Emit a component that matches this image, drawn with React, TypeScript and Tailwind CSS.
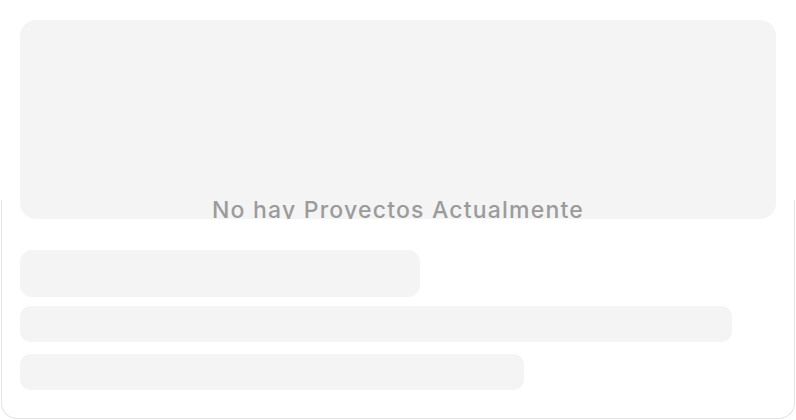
export default function App() {
  return (
    <div className="w-[796px] h-[420px] bg-white overflow-hidden font-['Inter',sans-serif]">
      {/* Hero placeholder */}
      <div className="relative z-10 px-5 pt-5">
        <div className="h-[199px] rounded-2xl bg-[#f4f4f4] overflow-hidden pt-[176px]">
          <p className="text-center text-[23px] leading-[28px] font-medium text-[#9b9b9b] tracking-[1.2px]">
            No hay Proyectos Actualmente
          </p>
        </div>
      </div>

      {/* Card with skeleton rows */}
      <div className="-mt-[19px] mx-px h-[219px] rounded-b-2xl border-x border-b border-[#e4e4e4] px-[18px] pt-[50px]">
        <div className="w-[400px] h-[47px] rounded-xl bg-[#f4f4f4] mb-[9px]"></div>
        <div className="w-[712px] h-9 rounded-[10px] bg-[#f4f4f4] mb-3"></div>
        <div className="w-[504px] h-9 rounded-[10px] bg-[#f4f4f4]"></div>
      </div>
    </div>
  );
}
